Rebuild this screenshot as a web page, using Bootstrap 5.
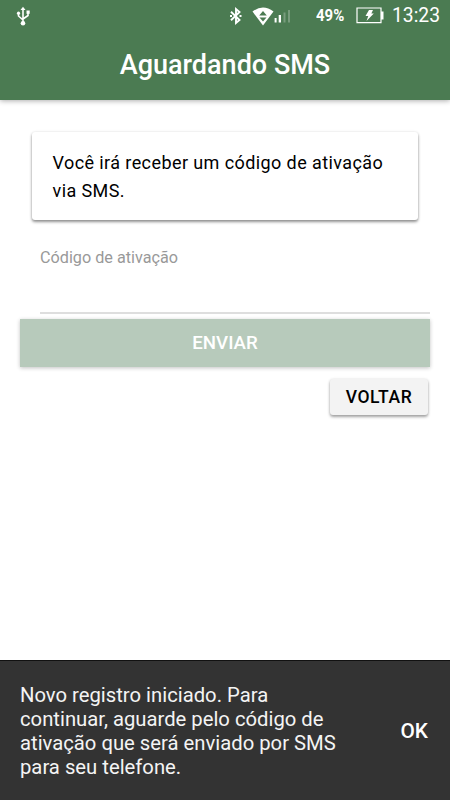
<!DOCTYPE html>
<html lang="pt-BR">
<head>
<meta charset="utf-8">
<meta name="viewport" content="width=device-width, initial-scale=1">
<title>Aguardando SMS</title>
<link href="https://cdn.jsdelivr.net/npm/bootstrap@5.3.0/dist/css/bootstrap.min.css" rel="stylesheet">
<style>
body { font-family: Roboto, "Liberation Sans", sans-serif; color: #000; height: 800px; overflow: hidden; }
.app-header { background: #4b7b52; height: 100px; box-shadow: 0 1px 5px rgba(0,0,0,.32); }
.status-bar { height: 31px; padding: 0 10px 0 16px; }
.signal-icon { margin-left: 10px; }
.battery-icon { margin-left: 12px; }
.battery-level { font-size: 17px; font-weight: 700; width: 28px; margin-left: 24px; padding-top: 1px; }
.battery-level span { display: inline-block; transform: scaleX(.88); transform-origin: left; }
.clock { font-size: 19.3px; width: 48px; margin-left: 8px; padding-top: 1px; text-align: right; }
.page-title { font-size: 27px; font-weight: 500; height: 69px; line-height: 68px; }
.notice { margin: 32px 32px 0; height: 88px; padding: 17px 20px 17px 20.500px; border-radius: 3px; font-size: 18px; line-height: 27.5px; letter-spacing: .41px; box-shadow: 0 2px 3px rgba(0,0,0,.42), 0 0 3px rgba(0,0,0,.1); }
.code-field { margin: 20px 20px 0 40px; height: 74px; border-bottom: 2px solid #dedede; }
.code-field label { font-size: 16.2px; line-height: 35px; color: #999; }
.code-field .form-control { height: 37px; }
.send { margin: 5px 20px 0; height: 48px; background: #b7cabb !important; color: #fff !important; font-size: 18.7px; font-weight: 500; box-shadow: 0 1px 4px rgba(0,0,0,.24); opacity: 1 !important; }
.back { margin: 12px 22px 0 0; width: 98px; height: 36px; background: #f3f3f3; color: #000; font-size: 17.5px; font-weight: 500; letter-spacing: .6px; border-radius: 3px; box-shadow: 0 2px 3px rgba(0,0,0,.35), 0 0 3px rgba(0,0,0,.1); }
.toast-bar { background: #333; border-top: 1px solid #111; height: 140px; padding: 0 22px 0 20px; color: #f4f4f4; }
.toast-message { width: 325px; font-size: 20.25px; line-height: 24px; }
.toast-action { font-size: 20.8px; font-weight: 500; line-height: 30px; margin-top: 1px; color: #fff; }
</style>
<script src="https://cdn.jsdelivr.net/npm/bootstrap@5.3.0/dist/js/bootstrap.bundle.min.js"></script>
</head>
<body class="d-flex flex-column bg-white">
<header class="app-header flex-shrink-0 text-white">
  <div class="status-bar d-flex align-items-center">
    <svg width="15" height="20" viewBox="0 0 15 20" fill="none" stroke="#fff" stroke-width="1.600"><path d="M7 17V3M2.500 7v3L7 14M12 6v3.500L7 13"/><path d="M4.500 4 7 .8 9.500 4z" fill="#fff" stroke="none"/><circle cx="7" cy="17.200" r="2.300" fill="#fff" stroke="none"/><circle cx="2.500" cy="7.200" r="1.600" fill="#fff" stroke="none"/><path d="M10.500 4.500h3.200v3.300h-3.200z" fill="#fff" stroke="none"/></svg>
    <svg class="ms-auto" width="12" height="20" viewBox="0 0 12 20" fill="none" stroke="#fff" stroke-width="1.900"><path d="M1 5.700 9.500 14 6 17V3l3.500 3-8.500 8.300"/><path d="M0 9h2v2H0zM9.500 9h2v2h-2z" fill="#fff" stroke="none"/></svg>
    <svg class="signal-icon" width="40" height="20" viewBox="0 0 40 20"><path d="M.5 5.500Q11-2.500 21.500 5.500L11 19.500z" fill="#fff"/><path d="M11 5l3.800 4.500H7.200zM7.500 11.500h7L11 15.500z" fill="#4b7b52"/><path d="M22.600 12h2v4.500h-2zM26.700 9h2.300v7.500h-2.300z" fill="#fff"/><path d="M31.500 6.500h2v10h-2zM36 4h2v12.500h-2z" fill="#fff" opacity=".25"/></svg>
    <div class="battery-level"><span>49%</span></div>
    <svg class="battery-icon" width="28" height="17" viewBox="0 0 28 17"><path d="M1 1h24v14.600H1z" fill="none" stroke="#fff" stroke-width="1.200"/><path d="M25 4.500h2.500v8H25zM13 3h4l-1.700 3.500h2.500L10.500 14l1.800-5H9.500z" fill="#fff"/></svg>
    <div class="clock">13:23</div>
  </div>
  <h1 class="page-title text-center m-0">Aguardando SMS</h1>
</header>
<main class="flex-grow-1">
  <section class="notice bg-white">Você irá receber um código de ativação via SMS.</section>
  <form>
    <div class="code-field">
      <label class="d-block" for="code">Código de ativação</label>
      <input id="code" type="text" class="form-control border-0 shadow-none bg-transparent p-0">
    </div>
    <div class="d-grid"><button type="button" class="send btn border-0 rounded-0 p-0" disabled>ENVIAR</button></div>
    <div class="d-flex justify-content-end"><button type="button" class="back btn border-0 p-0">VOLTAR</button></div>
  </form>
</main>
<div class="toast-bar flex-shrink-0 d-flex align-items-center justify-content-between">
  <div class="toast-message">Novo registro iniciado. Para continuar, aguarde pelo código de ativação que será enviado por SMS para seu telefone.</div>
  <button type="button" class="toast-action btn border-0 p-0">OK</button>
</div>
</body>
</html>
